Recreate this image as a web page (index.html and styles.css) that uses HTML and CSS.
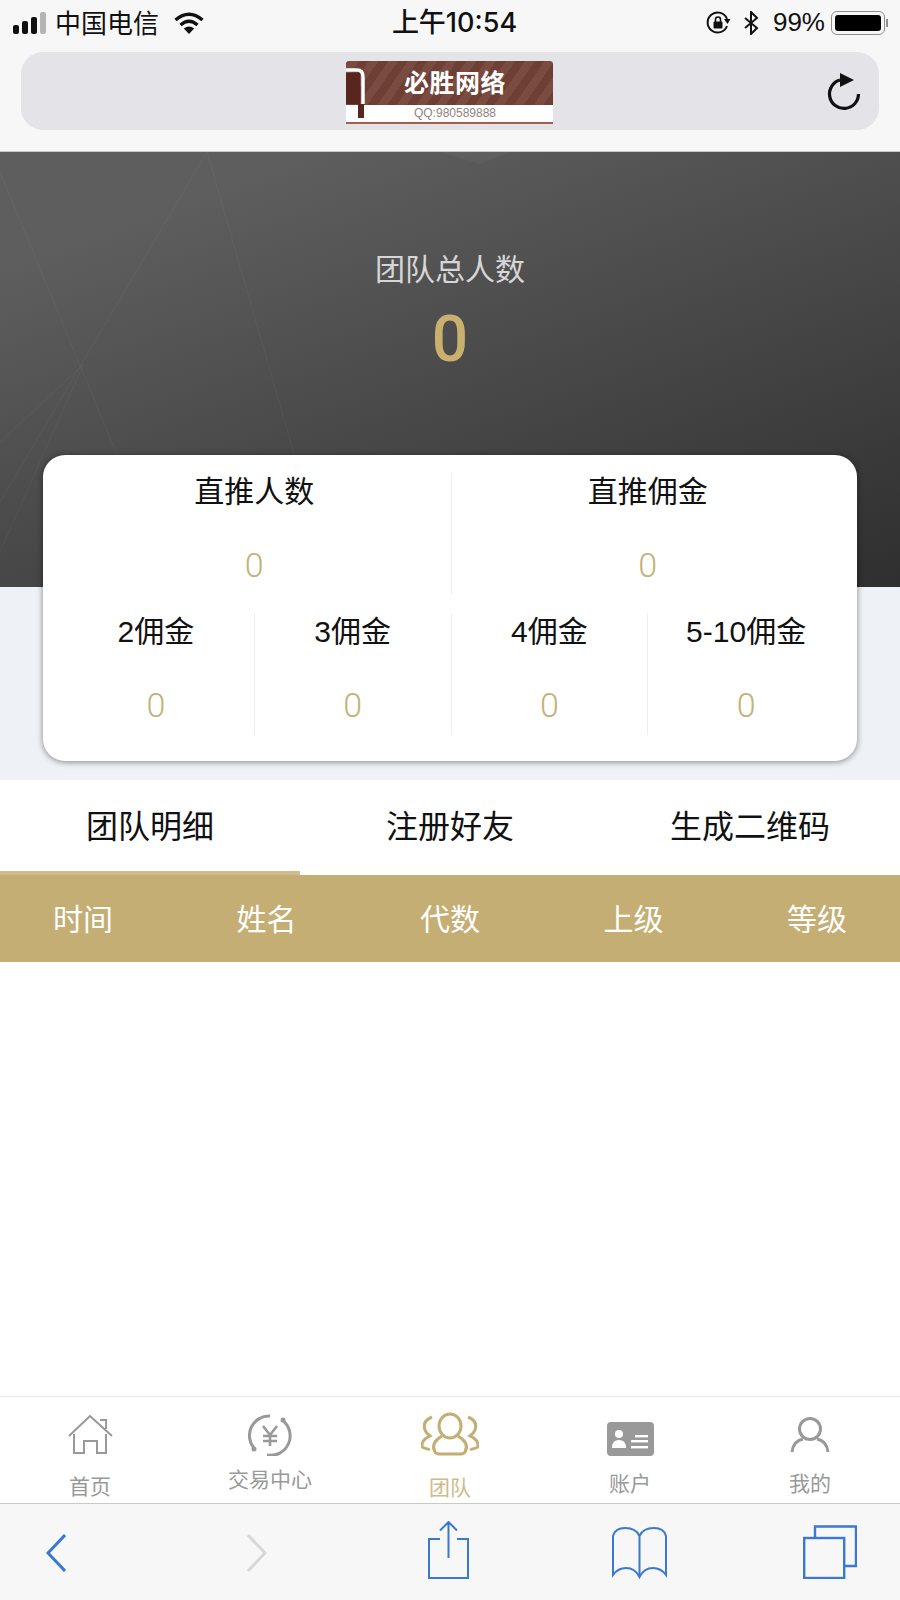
FILE: index.html
```html
<!DOCTYPE html>
<html lang="zh-CN">
<head>
  <meta charset="UTF-8" />
  <title>团队</title>
  <link rel="stylesheet" href="styles.css">
</head>
<body>
  <div class="phone">
    <!-- Browser chrome -->
    <header class="chrome">
      <div class="status">
        <div class="status-left">
          <svg class="signal" width="36" height="22" viewBox="0 0 36 22">
            <rect x="0" y="13" width="6" height="9" rx="2" fill="#111"/>
            <rect x="9" y="9" width="6" height="13" rx="2" fill="#111"/>
            <rect x="18" y="5" width="6" height="17" rx="2" fill="#111"/>
            <rect x="27" y="0" width="6" height="22" rx="2" fill="#b5b5b5"/>
          </svg>
          <span class="carrier">中国电信</span>
          <svg class="wifi" width="30" height="23" viewBox="0 0 30 23" fill="none" stroke="#111" stroke-width="3.4">
            <path d="M1.5 8 Q15 -3.5 28.5 8"/>
            <path d="M6.5 13 Q15 5.5 23.5 13"/>
            <path d="M15 22 L9.8 16.6 Q15 12.6 20.2 16.6 Z" fill="#111" stroke="none"/>
          </svg>
        </div>
        <div class="clock">上午10:54</div>
        <div class="status-right">
          <svg class="rotate" width="25" height="24" viewBox="0 0 25 24" fill="none" stroke="#111" stroke-width="2">
            <path d="M21 15 A10 10 0 1 1 21 8"/>
            <path d="M18 8 L24.5 8 L21.500 13 Z" fill="#111" stroke="none"/>
            <rect x="7.500" y="10.500" width="9" height="7" rx="1" fill="#111" stroke="none"/>
            <path d="M9.500 11 V8.500 A2.500 2.500 0 0 1 14.500 8.500 V11" stroke-width="1.600"/>
          </svg>
          <svg class="bluetooth" width="15" height="24" viewBox="0 0 15 24" fill="none" stroke="#111" stroke-width="2">
            <path d="M1 7 L13 17 L7 23 V1 L13 7 L1 17"/>
          </svg>
          <span class="battery-pct">99%</span>
          <span class="battery"><span class="battery-fill"></span></span>
          <span class="battery-tip"></span>
        </div>
      </div>
      <div class="address">
        <span></span>
        <div class="logo">
          <div class="logo-band">必胜网络</div>
          <div class="logo-qq">QQ:980589888</div>
          <svg class="logo-mark" width="20" height="58" viewBox="0 0 20 58">
            <path d="M0 9 H11 Q17 9 17 16 V43" fill="none" stroke="#fff" stroke-width="3.500"/>
            <rect x="0" y="12" width="14" height="31" fill="#57261f"/>
            <rect x="12" y="43" width="6" height="14" fill="#57261f"/>
          </svg>
        </div>
        <svg class="reload" width="35" height="39" viewBox="0 0 35 39" fill="none" stroke="#111" stroke-width="3.2">
          <path d="M14 8 A14.500 14.500 0 1 0 32.500 22"/>
          <path d="M14 1 L28 8 L14 15 Z" fill="#111" stroke="none"/>
        </svg>
      </div>
    </header>

    <!-- Team summary -->
    <section class="summary">
      <div class="hero">
        <svg class="hero-lines" width="900" height="435" viewBox="0 0 900 435" fill="none" stroke="#fff" stroke-opacity="0.045">
          <path d="M207 0 L0 350"/>
          <path d="M0 20 L118 305"/>
          <path d="M207 0 L295 305"/>
          <path d="M83 213 L0 290"/>
          <path d="M83 213 L0 400"/>
          <path d="M440 0 L480 12 L510 0" fill="#fff" fill-opacity="0.03" stroke="none"/>
        </svg>
        <div class="hero-label">团队总人数</div>
        <div class="hero-value">0</div>
      </div>
      <div class="card">
        <div class="card-row">
          <div class="stat">
            <div class="stat-label">直推人数</div>
            <div class="stat-value">0</div>
          </div>
          <div class="stat">
            <div class="stat-label">直推佣金</div>
            <div class="stat-value">0</div>
          </div>
        </div>
        <div class="card-row">
          <div class="stat">
            <div class="stat-label">2佣金</div>
            <div class="stat-value">0</div>
          </div>
          <div class="stat">
            <div class="stat-label">3佣金</div>
            <div class="stat-value">0</div>
          </div>
          <div class="stat">
            <div class="stat-label">4佣金</div>
            <div class="stat-value">0</div>
          </div>
          <div class="stat">
            <div class="stat-label">5-10佣金</div>
            <div class="stat-value">0</div>
          </div>
        </div>
      </div>
    </section>

    <!-- Tabs and table -->
    <nav class="tabs">
      <a class="tab active">团队明细</a>
      <a class="tab">注册好友</a>
      <a class="tab">生成二维码</a>
    </nav>
    <div class="table-head">
      <span>时间</span>
      <span>姓名</span>
      <span>代数</span>
      <span>上级</span>
      <span>等级</span>
    </div>
    <div class="table-body"></div>

    <!-- App tab bar -->
    <nav class="tabbar">
      <a class="tabbar-item item-home">
        <svg width="45" height="40" viewBox="0 0 45 40" fill="none" stroke="#999" stroke-width="2">
          <path d="M1 21 L22 1 L44 21"/>
          <path d="M32 5 H38 V14"/>
          <path d="M6 19 V38 H16 V26 H29 V38 H38 V19"/>
        </svg>
        <span>首页</span>
      </a>
      <a class="tabbar-item item-trade">
        <svg width="44" height="42" viewBox="0 0 44 42" fill="none" stroke="#999" stroke-width="3">
          <path d="M22 2 A19.500 19.500 0 0 0 6 34"/>
          <path d="M34 6 A19.500 19.500 0 0 1 19 41"/>
          <circle cx="6" cy="35" r="2.500" fill="#999" stroke="none"/>
          <circle cx="35" cy="6" r="2.500" fill="#999" stroke="none"/>
          <path d="M15 12 L22 21 L29 12 M22 21 V32 M15 22 H29 M15 27 H29" stroke-width="2.600"/>
        </svg>
        <span>交易中心</span>
      </a>
      <a class="tabbar-item item-team active">
        <svg width="58" height="44" viewBox="0 0 58 44" fill="none" stroke="#c4ae74" stroke-width="3">
          <ellipse cx="29" cy="14" rx="11" ry="12"/>
          <path d="M21 24 Q9 31 14 40 Q15 42 20 42 H38 Q43 42 44 40 Q49 31 37 24"/>
          <path d="M11 5 Q1 9 4 18 Q5 21 9 24 Q0 28 1 35 Q7 38 9 37"/>
          <path d="M47 5 Q57 9 54 18 Q53 21 49 24 Q58 28 57 35 Q51 38 49 37"/>
        </svg>
        <span>团队</span>
      </a>
      <a class="tabbar-item item-account">
        <svg width="47" height="34" viewBox="0 0 47 34">
          <rect width="47" height="34" rx="4" fill="#999"/>
          <circle cx="12" cy="12" r="4" fill="#fff"/>
          <path d="M5 26 Q5 18 12 18 Q19 18 19 26 Z" fill="#fff"/>
          <rect x="28" y="13" width="13" height="2.400" fill="#fff"/>
          <rect x="24" y="18" width="17" height="2.400" fill="#fff"/>
          <rect x="24" y="24" width="17" height="2.400" fill="#fff"/>
        </svg>
        <span>账户</span>
      </a>
      <a class="tabbar-item item-me">
        <svg width="40" height="36" viewBox="0 0 40 36" fill="none" stroke="#999" stroke-width="3">
          <circle cx="20" cy="12" r="10.500"/>
          <path d="M2 35 Q3 24 13 22 M38 35 Q37 24 27 22"/>
        </svg>
        <span>我的</span>
      </a>
    </nav>

    <!-- Browser toolbar -->
    <footer class="toolbar">
      <svg class="tool-back" width="20" height="38" viewBox="0 0 20 38" fill="none" stroke="#3a78d4" stroke-width="3">
        <path d="M19 1 L2 19 L19 37"/>
      </svg>
      <svg class="tool-forward" width="20" height="38" viewBox="0 0 20 38" fill="none" stroke="#d8d8d8" stroke-width="3">
        <path d="M1 1 L18 19 L1 37"/>
      </svg>
      <svg class="tool-share" width="41" height="58" viewBox="0 0 41 58" fill="none" stroke="#3a78d4" stroke-width="2">
        <path d="M12 18 H1 V57 H40 V18 H29"/>
        <path d="M20.500 37 V2 M12 9.500 L20.500 1 L29 9.500"/>
      </svg>
      <svg class="tool-book" width="55" height="52" viewBox="0 0 55 52" fill="none" stroke="#3a78d4" stroke-width="2">
        <path d="M27.500 9 Q24 1 13 1 Q3 1 1 9 V48 Q6 41 14 41 Q23 41 27.500 50 Q32 41 41 41 Q49 41 54 48 V9 Q52 1 42 1 Q31 1 27.500 9 V50"/>
      </svg>
      <svg class="tool-pages" width="54" height="54" viewBox="0 0 54 54" fill="none" stroke="#3a78d4" stroke-width="2.400">
        <path d="M12 12 V1.500 H53 V41 H42"/>
        <rect x="1.200" y="13" width="40" height="40"/>
      </svg>
    </footer>
  </div>
</body>
</html>
```

FILE: styles.css
```css
* {
  box-sizing: border-box;
}

body {
  margin: 0;
  font-family: "Liberation Sans", "Noto Sans CJK SC", sans-serif;
  color: #111;
  background: #fff;
}

.phone {
  width: 900px;
  height: 1600px;
  display: flex;
  flex-direction: column;
  overflow: hidden;
}

/* browser chrome */
.chrome {
  height: 152px;
  background: #f7f7f7;
  border-bottom: 1px solid #c9c9c9;
  flex-shrink: 0;
}

.status {
  height: 52px;
  padding: 0 12px 6px 13px;
  display: grid;
  grid-template-columns: 1fr auto 1fr;
  align-items: center;
}

.status-left,
.status-right {
  display: flex;
  align-items: center;
}

.status-right {
  justify-content: flex-end;
}

.carrier {
  margin-left: 6px;
  padding-bottom: 4px;
  font-size: 26px;
}

.wifi {
  margin-left: 15px;
}

.clock {
  padding: 0 0 5px 8px;
  font-family: Inter, "Noto Sans CJK SC", sans-serif;
  font-size: 27px;
  font-weight: 500;
}

.bluetooth {
  margin-left: 13px;
}

.battery-pct {
  margin-left: 14px;
  padding-bottom: 1px;
  font-size: 26px;
}

.battery {
  width: 54px;
  height: 24px;
  margin-left: 6px;
  padding: 3px;
  border: 1.5px solid #8e8e8e;
  border-radius: 6px;
}

.battery-fill {
  display: block;
  width: 100%;
  height: 100%;
  background: #000;
  border-radius: 3px;
}

.battery-tip {
  width: 2px;
  height: 8px;
  margin-left: 1px;
  background: #8e8e8e;
}

.address {
  height: 78px;
  margin: 0 21px;
  padding: 9px 2px 0 0;
  background: #e3e3e8;
  border-radius: 22px;
  display: grid;
  grid-template-columns: 1fr 207px 1fr;
  align-items: start;
}

.reload {
  justify-self: end;
  margin: 11px 16px 0 0;
}

.logo {
  position: relative;
  width: 207px;
  height: 63px;
  background: #fff;
  border-bottom: 2px solid #a0614f;
  border-radius: 3px 3px 0 0;
  overflow: hidden;
}

.logo-band {
  height: 44px;
  padding-left: 12px;
  background: repeating-linear-gradient(-55deg, #6d3f35 0 8px, #7a4c41 8px 16px);
  color: #fff;
  font-size: 25px;
  font-weight: 700;
  line-height: 44px;
  text-align: center;
  letter-spacing: 0.5px;
}

.logo-qq {
  padding-left: 12px;
  color: #8f8280;
  font-size: 12px;
  line-height: 17px;
  text-align: center;
}

.logo-mark {
  position: absolute;
  top: 0;
  left: 0;
}

/* team summary */
.summary {
  height: 628px;
  background: #eef1f5;
  flex-shrink: 0;
}

.hero {
  position: relative;
  height: 435px;
  padding-top: 96px;
  background: linear-gradient(160deg, #5e5e5e 15%, #2f2f2f 100%);
  text-align: center;
}

.hero-lines {
  position: absolute;
  top: 0;
  left: 0;
}

.hero-label {
  position: relative;
  color: #d6d6d6;
  font-size: 30px;
  line-height: 44px;
}

.hero-value {
  position: relative;
  margin-top: 12px;
  color: #c9b06f;
  font-family: Roboto, sans-serif;
  font-size: 64px;
  font-weight: 500;
  line-height: 72px;
}

.card {
  position: relative;
  width: 814px;
  height: 306px;
  margin: -132px auto 0;
  padding: 18px 13px 0 15px;
  background: #fff;
  border-radius: 22px;
  box-shadow: 0 1px 6px rgba(0, 0, 0, 0.45);
}

.card-row {
  display: flex;
  height: 122px;
  margin-bottom: 18px;
}

.stat {
  flex: 1;
  text-align: center;
  border-left: 1px solid #eeeeee;
}

.stat:first-child {
  border-left: 0;
}

.stat-label {
  font-size: 30px;
  line-height: 38px;
}

.stat-value {
  margin-top: 35px;
  color: #c2b27a;
  font-family: Roboto, sans-serif;
  font-size: 34px;
  font-weight: 300;
  line-height: 38px;
}

/* tabs and table */
.tabs {
  display: flex;
  height: 95px;
  flex-shrink: 0;
  background: #fff;
}

.tab {
  flex: 1;
  padding-top: 23px;
  font-size: 32px;
  line-height: 48px;
  text-align: center;
}

.tab.active {
  border-bottom: 4px solid #d2b98e;
}

.table-head {
  height: 87px;
  padding: 0 53px 4px;
  flex-shrink: 0;
  display: flex;
  justify-content: space-between;
  align-items: center;
  background: #c4ae74;
  color: #fff;
  font-size: 30px;
}

.table-body {
  flex: 1;
  background: #fff;
}

/* app tab bar */
.tabbar {
  height: 108px;
  flex-shrink: 0;
  display: flex;
  background: #fff;
  border-top: 1px solid #e8e8e8;
  border-bottom: 1px solid #c9c9c9;
}

.tabbar-item {
  flex: 1;
  display: flex;
  flex-direction: column;
  align-items: center;
  color: #999;
  font-size: 21px;
  line-height: 24px;
}

.tabbar-item svg {
  display: block;
}

.tabbar-item.active {
  color: #cdbb8c;
}

.item-home {
  padding-top: 18px;
}

.item-home span {
  margin-top: 20px;
}

.item-trade {
  padding-top: 17px;
}

.item-trade span {
  margin-top: 12px;
}

.item-team {
  padding-top: 15px;
}

.item-team span {
  margin-top: 20px;
}

.item-account {
  padding-top: 25px;
}

.item-account span {
  margin-top: 16px;
}

.item-me {
  padding-top: 20px;
}

.item-me span {
  margin-top: 19px;
}

/* browser toolbar */
.toolbar {
  height: 96px;
  flex-shrink: 0;
  display: flex;
  align-items: flex-start;
  background: #f7f7f7;
}

.tool-back {
  margin: 30px 0 0 46px;
}

.tool-forward {
  margin: 30px 0 0 181px;
}

.tool-share {
  margin: 17px 0 0 161px;
}

.tool-book {
  margin: 23px 0 0 143px;
}

.tool-pages {
  margin: 21px 0 0 136px;
}
```
